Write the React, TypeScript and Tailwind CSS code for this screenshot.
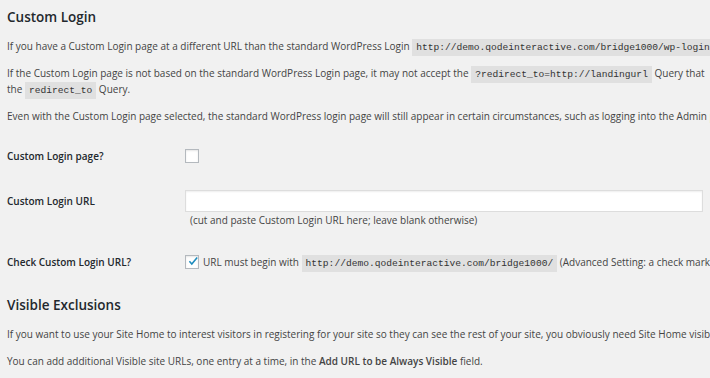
import React from "react";

const code = "bg-[rgba(0,0,0,0.07)] px-[4px] py-[3px] font-['Liberation_Mono',monospace] text-[9.6px] leading-none text-[#333]";

function Check({ checked }: { checked?: boolean }) {
  return (
    <span className="inline-flex h-[14px] w-[14px] shrink-0 items-center justify-center border border-[#b4b9be] bg-white shadow-[inset_0_1px_2px_rgba(0,0,0,0.1)]">
      {checked && (
        <svg viewBox="0 0 20 20" className="h-[16px] w-[16px] -translate-y-[1px] translate-x-[1px]">
          <path d="M4 10.5l4 4.5 9-11" fill="none" stroke="#1e8cbe" strokeWidth="2.6" />
        </svg>
      )}
    </span>
  );
}

export default function App() {
  return (
    <div className="h-[378px] w-[710px] overflow-hidden whitespace-nowrap bg-[#f1f1f1] px-[7px] font-['Open_Sans',sans-serif] text-[10px] text-[#444]">
      <h2 className="mt-[8px] text-[13.5px] font-semibold leading-[18px] text-[#23282d]">Custom Login</h2>
      <p className="mt-[12px] leading-[16px]">
        If you have a Custom Login page at a different URL than the standard WordPress Login{" "}
        <code className={code}>http://demo.qodeinteractive.com/bridge1000/wp-login.php</code>
      </p>
      <p className="mt-[11px] leading-[16px]">
        If the Custom Login page is not based on the standard WordPress Login page, it may not accept the{" "}
        <code className={code}>?redirect_to=http://landingurl</code> Query that
        <br />
        the <code className={code}>redirect_to</code> Query.
      </p>
      <p className="mt-[11px] leading-[16px]">
        Even with the Custom Login page selected, the standard WordPress login page will still appear in certain circumstances, such as logging into the Admin panels.
      </p>

      <div className="mt-[24px] flex h-[16px] items-center">
        <div className="w-[178px] shrink-0 font-semibold text-[#23282d]">Custom Login page?</div>
        <Check />
      </div>

      <div className="mt-[26px] flex">
        <div className="w-[178px] shrink-0 font-semibold leading-[22px] text-[#23282d]">Custom Login URL</div>
        <div className="flex flex-col">
          <div className="h-[22px] w-[518px] border border-[#ddd] bg-white shadow-[inset_0_1px_2px_rgba(0,0,0,0.07)]" />
          <div className="pl-[5px] leading-[16px]">(cut and paste Custom Login URL here; leave blank otherwise)</div>
        </div>
      </div>

      <div className="mt-[26px] flex h-[16px] items-center">
        <div className="w-[178px] shrink-0 font-semibold text-[#23282d]">Check Custom Login URL?</div>
        <Check checked />
        <span className="ml-[4px] leading-[16px]">
          URL must begin with <code className={code}>http://demo.qodeinteractive.com/bridge1000/</code> (Advanced Setting: a check mark here is recommended)
        </span>
      </div>

      <h2 className="mt-[26px] text-[13.5px] font-semibold leading-[18px] text-[#23282d]">Visible Exclusions</h2>
      <p className="mt-[12px] leading-[16px]">
        If you want to use your Site Home to interest visitors in registering for your site so they can see the rest of your site, you obviously need Site Home visible.
      </p>
      <p className="mt-[11px] leading-[16px]">
        You can add additional Visible site URLs, one entry at a time, in the <b className="font-semibold">Add URL to be Always Visible</b> field.
      </p>
    </div>
  );
}
